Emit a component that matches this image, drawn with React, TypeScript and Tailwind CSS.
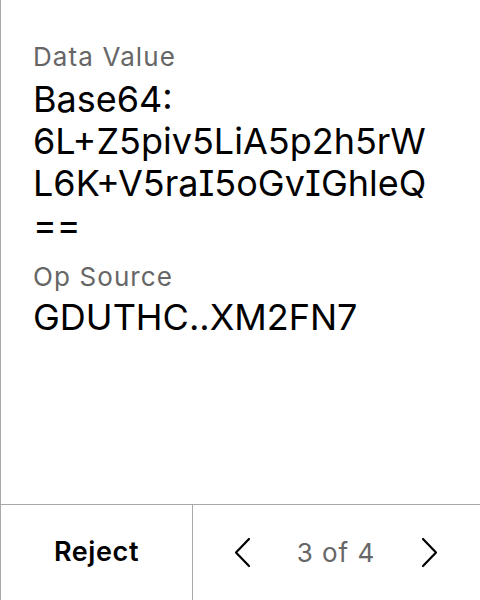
import React from 'react';

const ChevronLeft = () => (
  <svg width="17" height="31" viewBox="0 0 17 31" fill="none" stroke="#000" strokeWidth="2.2" strokeLinecap="round" strokeLinejoin="round">
    <path d="M15 2 L2 15.5 L15 29" />
  </svg>
);

const ChevronRight = () => (
  <svg width="17" height="31" viewBox="0 0 17 31" fill="none" stroke="#000" strokeWidth="2.2" strokeLinecap="round" strokeLinejoin="round">
    <path d="M2 2 L15 15.5 L2 29" />
  </svg>
);

const App: React.FC = () => {
  return (
    <div
      className="flex flex-col h-[600px] w-[480px] bg-white border-l border-[#a8a8a8] text-black [font-feature-settings:'cv08']"
      style={{ fontFamily: 'Inter, "Noto Sans", sans-serif' }}
    >
      <div className="flex-1 pl-[32px] pr-[44px] pt-[40px]">
        <div className="text-[26px] leading-[34px] tracking-[1.1px] text-[#666666]">Data Value</div>
        <div className="mt-[4px] text-[36px] leading-[42px] [overflow-wrap:anywhere]">
          Base64: 6L+Z5piv5LiA5p2h5rWL6K+V5raI5oGvIGhleQ==
        </div>
        <div className="mt-[14px] text-[26px] leading-[34px] tracking-[1.1px] text-[#666666]">Op Source</div>
        <div className="mt-[2px] text-[36px] leading-[43px]">GDUTHC..XM2FN7</div>
      </div>
      <div className="flex h-[96px] border-t border-[#a8a8a8]">
        <button className="w-[191px] flex items-center justify-center text-[27px] tracking-[0.6px] font-semibold">
          Reject
        </button>
        <div className="flex-1 flex items-center justify-between border-l border-[#a8a8a8] pl-[41px] pr-[42px]">
          <ChevronLeft />
          <span className="text-[26px] tracking-[1px] text-[#666666]">3 of 4</span>
          <ChevronRight />
        </div>
      </div>
    </div>
  );
};

export default App;
